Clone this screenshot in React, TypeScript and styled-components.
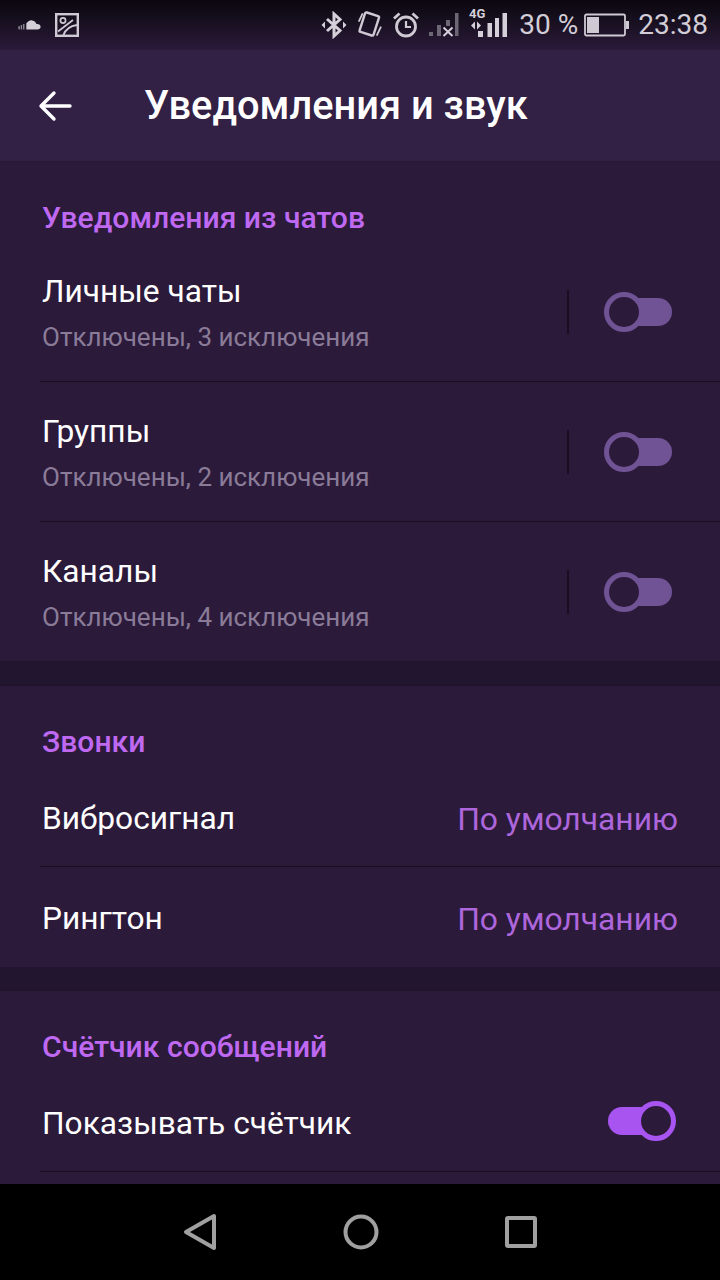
import React from "react";
import styled, { createGlobalStyle } from "styled-components";

const Global = createGlobalStyle`
  html, body { margin: 0; padding: 0; background: #000; }
  * { box-sizing: border-box; }
`;

const Screen = styled.div`
  width: 720px;
  height: 1280px;
  display: flex;
  flex-direction: column;
  overflow: hidden;
  background: #221530;
  font-family: Roboto, "Noto Sans", sans-serif;
  color: #fff;
`;

const StatusBar = styled.div`
  height: 50px;
  flex: none;
  display: flex;
  align-items: center;
  padding: 0 12px 0 18px;
  color: #cfc9d4;
  background: linear-gradient(180deg, #0a070e 0%, #150e1c 35%, #2b1a3a 100%);
`;

const StatusGroup = styled.div<{ $gap: number }>`
  display: flex;
  align-items: center;
  gap: ${(p) => p.$gap}px;
`;

const StatusRight = styled(StatusGroup)`
  margin-left: auto;
`;

const StatusText = styled.span`
  font-size: 28px;
  line-height: 50px;
  color: #d2cdd6;
  white-space: nowrap;
`;

const Toolbar = styled.header`
  height: 112px;
  flex: none;
  display: flex;
  align-items: center;
  padding-left: 38px;
  gap: 72px;
  background: #322045;
  border-bottom: 1px solid #271833;
`;

const Title = styled.h1`
  margin: 0;
  font-size: 39.8px;
  font-weight: 500;
  line-height: 112px;
`;

const Content = styled.main`
  flex: 1;
  min-height: 0;
  overflow: hidden;
  display: flex;
  flex-direction: column;
`;

const Section = styled.section<{ $top?: number }>`
  flex: none;
  margin-top: ${(p) => p.$top ?? 0}px;
  background: #2c1a3b;
  box-shadow: 0 -1px 0 #1f132a;
`;

const SectionTitle = styled.h2`
  margin: 0;
  padding: 30px 42px 0;
  height: 80px;
  display: flex;
  align-items: center;
  font-size: 30.1px;
  font-weight: 500;
  color: #bf69f2;
`;

const Row = styled.div<{ $h: number; $last?: boolean; $lift?: number }>`
  height: ${(p) => p.$h}px;
  margin-left: 40px;
  padding: 0 42px ${(p) => p.$lift ?? 0}px 2px;
  display: flex;
  align-items: center;
  justify-content: space-between;
  border-bottom: ${(p) => (p.$last ? "none" : "1px solid #180e20")};
`;

const TextBlock = styled.div`
  display: flex;
  flex-direction: column;
  gap: 7px;
  padding-top: 3px;
`;

const RowLabel = styled.div`
  font-size: 31.7px;
  line-height: 40px;
  color: #fff;
`;

const SingleLabel = styled(RowLabel)`
  margin-top: 6px;
`;

const RowSub = styled.div`
  font-size: 26px;
  line-height: 36px;
  color: #8a7c98;
`;

const RowValue = styled.div`
  font-size: 31.8px;
  line-height: 40px;
  margin-top: 6px;
  color: #ad66dc;
`;

const ToggleArea = styled.div`
  display: flex;
  align-items: center;
  margin-right: 6px;
`;

const VDivider = styled.div`
  width: 2px;
  height: 44px;
  background: #180e20;
  margin-right: 35px;
`;

const Toggle = styled.div<{ $on?: boolean }>`
  position: relative;
  width: 68px;
  height: 40px;
  display: flex;
  align-items: center;
  justify-content: flex-end;
  ${(p) => p.$on && "margin-right: 2px;"}
`;

const Track = styled.div<{ $on?: boolean }>`
  width: ${(p) => (p.$on ? "60px" : "48px")};
  height: 28px;
  border-radius: ${(p) => (p.$on ? "14px" : "0 14px 14px 0")};
  background: ${(p) => (p.$on ? "#a854f0" : "#6f5394")};
  ${(p) => (p.$on ? "margin-right: 8px;" : "")}
`;

const Knob = styled.div<{ $on?: boolean }>`
  position: absolute;
  top: 0;
  ${(p) => (p.$on ? "right: 0;" : "left: 0;")}
  width: 40px;
  height: 40px;
  border-radius: 50%;
  background: #2c1a3b;
  border: 5px solid ${(p) => (p.$on ? "#a854f0" : "#6f5394")};
`;

const NavBar = styled.nav`
  height: 96px;
  flex: none;
  background: #000;
  display: grid;
  grid-template-columns: repeat(3, 160px);
  justify-content: start;
  padding-left: 121px;
  align-items: center;
  justify-items: center;
`;

const Sw = ({ on }: { on?: boolean }) => (
  <Toggle $on={on}>
    <Track $on={on} />
    <Knob $on={on} />
  </Toggle>
);

const NotifyRow = ({ label, sub, last }: { label: string; sub: string; last?: boolean }) => (
  <Row $h={last ? 139 : 140} $last={last}>
    <TextBlock>
      <RowLabel>{label}</RowLabel>
      <RowSub>{sub}</RowSub>
    </TextBlock>
    <ToggleArea>
      <VDivider />
      <Sw />
    </ToggleArea>
  </Row>
);

const Cloud = () => (
  <svg width="24" height="14" viewBox="0 0 26 14">
    <path d="M9 12V5.500c1.500-2.500 4-4 6.500-3.500 2.500.4 4 2 4.500 4 2.500-.4 4.500.8 4.500 3 0 2-1.500 3-3.500 3z" fill="#d4cfd8" />
    <path d="M1 12c-1-1-1-3 0-4h1v4zM3 12V7h1.500v5zM5.500 12V6H7v6z" fill="#8f8996" />
  </svg>
);

const ImageIcon = () => (
  <svg width="24" height="24" viewBox="0 0 24 24" fill="none" stroke="#cfc9d4" strokeWidth="2.400">
    <rect x="1.200" y="1.200" width="21.600" height="21.600" />
    <circle cx="8" cy="7.500" r="2.600" strokeWidth="1.700" />
    <path d="M3 18.500 L18 7" strokeWidth="1.700" />
    <path d="M8.500 22 C10.500 16.500 14.500 13 22 12" strokeWidth="2" />
  </svg>
);

const Bluetooth = () => (
  <svg width="26" height="28" viewBox="0 0 26 28" fill="none" stroke="#d4cfd8" strokeWidth="3">
    <path d="M6 8 L19 19.500 L13 25 V3 L19 8.500 L6 20" />
    <path d="M0.500 14 L4 10.500 V17.500 Z M25.500 14 L22 10.500 V17.500 Z" fill="#d4cfd8" stroke="none" />
  </svg>
);

const Vibrate = () => (
  <svg width="26" height="32" viewBox="0 0 26 32" fill="none" stroke="#cfc9d4" strokeWidth="2.400">
    <rect x="5" y="4.800" width="14.600" height="20.400" rx="1.500" transform="rotate(18 12.300 15)" />
    <path d="M1.700 12.700 L5.700 4.300" strokeWidth="1.800" />
    <path d="M24 17.700 L19.700 26.700" strokeWidth="1.800" />
  </svg>
);

const Alarm = () => (
  <svg width="26" height="26" viewBox="0 0 26 26" fill="none" stroke="#cfc9d4" strokeWidth="2.800">
    <circle cx="13" cy="14.500" r="9.500" />
    <path d="M13 9v6h5" strokeWidth="2.200" />
    <path d="M1 6.500 L6.500 1.500 M25 6.500 L19.500 1.500" strokeWidth="2.800" />
  </svg>
);

const SignalX = () => (
  <svg width="30" height="26" viewBox="0 0 30 26">
    <rect x="0" y="20" width="4" height="4" fill="#6d6675" />
    <rect x="8" y="13" width="4" height="11" fill="#6d6675" />
    <rect x="17" y="8" width="4" height="6" fill="#6d6675" />
    <rect x="26" y="1" width="3.500" height="23" fill="#6d6675" />
    <path d="M14.500 15.500 L23.500 24 M23.500 15.500 L14.500 24" stroke="#d4cfd8" strokeWidth="2" />
  </svg>
);

const Signal4G = () => (
  <svg width="40" height="38" viewBox="0 0 40 38">
    <text x="0" y="12" fontFamily="Roboto, sans-serif" fontWeight="700" fontSize="13" fill="#d4cfd8">4G</text>
    <path d="M6 15.500 L2 19.500 L6 23.500 Z M8 15.500 L12 19.500 L8 23.500 Z" fill="#d4cfd8" />
    <rect x="9" y="25" width="5" height="6" fill="#d4cfd8" />
    <rect x="18.500" y="17" width="4.500" height="14" fill="#d4cfd8" />
    <rect x="26" y="12" width="4" height="19" fill="#d4cfd8" />
    <rect x="33.500" y="7" width="4.500" height="24" fill="#d4cfd8" />
  </svg>
);

const Battery = () => (
  <svg width="46" height="24" viewBox="0 0 46 24">
    <rect x="1" y="1.500" width="40" height="21" rx="1.500" fill="none" stroke="#cfc9d4" strokeWidth="1.800" />
    <rect x="3" y="4" width="12" height="16" fill="#cfc9d4" />
    <rect x="42" y="8" width="3" height="8" fill="#cfc9d4" />
  </svg>
);

const BackArrow = () => (
  <svg width="34" height="32" viewBox="0 0 34 32" fill="none" stroke="#fff" strokeWidth="3.400" strokeLinecap="round" strokeLinejoin="round">
    <path d="M32 16 H3 M16 3 L3 16 L16 29" />
  </svg>
);

const NavBack = () => (
  <svg width="36" height="38" viewBox="0 0 36 38" fill="none" stroke="#a0a0a0" strokeWidth="4" strokeLinejoin="round">
    <path d="M31 3 L3 19 L31 35 Z" />
  </svg>
);

const NavHome = () => (
  <svg width="36" height="36" viewBox="0 0 36 36" fill="none" stroke="#a0a0a0" strokeWidth="4">
    <circle cx="18" cy="18" r="15.500" />
  </svg>
);

const NavRecent = () => (
  <svg width="32" height="32" viewBox="0 0 32 32" fill="none" stroke="#a0a0a0" strokeWidth="4" strokeLinejoin="round">
    <rect x="2" y="2" width="28" height="28" rx="1" />
  </svg>
);

export default function App() {
  return (
    <Screen>
      <Global />
      <StatusBar>
        <StatusGroup $gap={13}>
          <Cloud />
          <ImageIcon />
        </StatusGroup>
        <StatusRight $gap={10}>
          <Bluetooth />
          <Vibrate />
          <Alarm />
          <SignalX />
          <Signal4G />
          <StatusGroup $gap={8}>
            <StatusGroup $gap={6}>
              <StatusText>30 %</StatusText>
              <Battery />
            </StatusGroup>
            <StatusText>23:38</StatusText>
          </StatusGroup>
        </StatusRight>
      </StatusBar>
      <Toolbar>
        <BackArrow />
        <Title>Уведомления и звук</Title>
      </Toolbar>
      <Content>
        <Section>
          <SectionTitle>Уведомления из чатов</SectionTitle>
          <NotifyRow label="Личные чаты" sub="Отключены, 3 исключения" />
          <NotifyRow label="Группы" sub="Отключены, 2 исключения" />
          <NotifyRow label="Каналы" sub="Отключены, 4 исключения" last />
        </Section>
        <Section $top={25}>
          <SectionTitle>Звонки</SectionTitle>
          <Row $h={101}>
            <SingleLabel>Вибросигнал</SingleLabel>
            <RowValue>По умолчанию</RowValue>
          </Row>
          <Row $h={100} $last $lift={2}>
            <SingleLabel>Рингтон</SingleLabel>
            <RowValue>По умолчанию</RowValue>
          </Row>
        </Section>
        <Section $top={24}>
          <SectionTitle>Счётчик сообщений</SectionTitle>
          <Row $h={101}>
            <SingleLabel>Показывать счётчик</SingleLabel>
            <Sw on />
          </Row>
          <Row $h={40} $last />
        </Section>
      </Content>
      <NavBar>
        <NavBack />
        <NavHome />
        <NavRecent />
      </NavBar>
    </Screen>
  );
}
